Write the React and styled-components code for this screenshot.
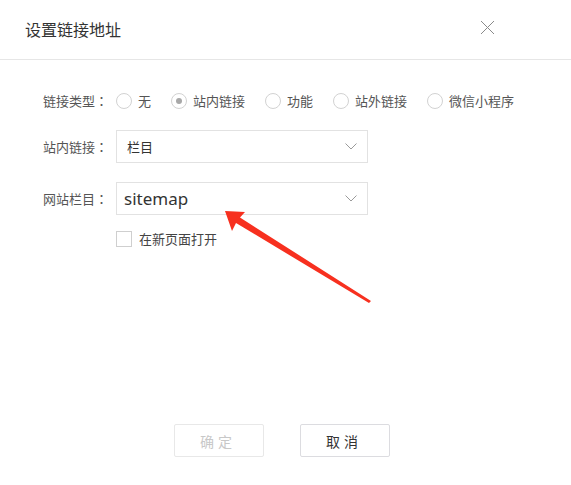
import React from 'react'
import styled, { createGlobalStyle } from 'styled-components'

const GlobalStyle = createGlobalStyle`
  html, body {
    margin: 0;
    padding: 0;
    background: #fff;
  }
  body {
    font-family: "Noto Sans CJK SC", "Noto Sans", sans-serif;
  }
`

const Dialog = styled.div`
  position: relative;
  width: 571px;
  height: 485px;
  display: flex;
  flex-direction: column;
  background: #fff;
  overflow: hidden;
`

const Header = styled.div`
  height: 59px;
  display: flex;
  align-items: center;
  justify-content: space-between;
  padding: 0 76px 0 25px;
  border-bottom: 1px solid #e6e6e6;
  box-sizing: content-box;
`

const Title = styled.h2`
  margin: 0 0 1px;
  font-size: 16px;
  font-weight: normal;
  color: #333;
  line-height: 20px;
`

const CloseBtn = styled.button`
  width: 15px;
  height: 15px;
  padding: 0;
  border: none;
  background: none;
  display: flex;
  margin-top: -4px;
`

const Body = styled.div`
  flex: 1;
  padding: 24px 0 0 43px;
  display: flex;
  flex-direction: column;
`

const Row = styled.div`
  display: flex;
  align-items: center;
  height: 33px;
  margin-top: ${p => p.$gap || 0}px;
`

const Label = styled.div`
  width: 73px;
  font-size: 13px;
  color: #555;
  flex-shrink: 0;
`

// full-width colon centred in its cell, as in the original
const Colon = styled.span`
  font-family: "Noto Sans CJK JP", sans-serif;
`

const RadioGroup = styled.div`
  display: flex;
  align-items: center;
  gap: 20px;
`

const RadioItem = styled.label`
  display: flex;
  align-items: center;
  gap: 6px;
  font-size: 13px;
  color: #555;
`

const Circle = styled.span`
  width: 14px;
  height: 14px;
  border: 1px solid #d2d2d2;
  border-radius: 50%;
  display: flex;
  align-items: center;
  justify-content: center;
  &::after {
    content: '';
    width: 6px;
    height: 6px;
    border-radius: 50%;
    background: #a8a8a8;
    display: ${p => (p.$checked ? 'block' : 'none')};
  }
`

const Select = styled.div`
  width: 252px;
  height: 33px;
  border: 1px solid #e2e2e2;
  display: flex;
  align-items: center;
  justify-content: space-between;
  padding: 0 10px 0 ${p => (p.$big ? 7 : 10)}px;
  font-family: ${p => (p.$big ? '"Noto Sans", sans-serif' : 'inherit')};
  font-size: ${p => (p.$big ? 17 : 13)}px;
  color: #333;
  box-sizing: border-box;
`

const CheckRow = styled.label`
  display: flex;
  align-items: center;
  gap: 7px;
  margin: 14px 0 0 73px;
  font-size: 13px;
  color: #444;
`

const Box = styled.span`
  width: 14px;
  height: 14px;
  border: 1px solid #cfcfcf;
`

const Footer = styled.div`
  display: flex;
  justify-content: center;
  gap: 36px;
  padding: 0 7px 28px 0;
`

const Button = styled.button`
  width: 90px;
  height: 33px;
  background: #fff;
  border: 1px solid ${p => (p.disabled ? '#e8e8e8' : '#dcdce0')};
  border-radius: 2px;
  font-family: "Noto Sans CJK SC", sans-serif;
  font-size: 14px;
  letter-spacing: 4px;
  padding-left: 4px;
  color: ${p => (p.disabled ? '#c8c8c8' : '#333')};
`

const Arrow = styled.svg`
  position: absolute;
  left: 0;
  top: 0;
  pointer-events: none;
`

const Chevron = () => (
  <svg width="12" height="7" viewBox="0 0 12 7">
    <path d="M0.5 0.5 L6 6 L11.5 0.5" fill="none" stroke="#9a9a9a" strokeWidth="1" />
  </svg>
)

const types = ['无', '站内链接', '功能', '站外链接', '微信小程序']

export default function App() {
  return (
    <Dialog>
      <GlobalStyle />
      <Header>
        <Title>设置链接地址</Title>
        <CloseBtn>
          <svg width="15" height="15" viewBox="0 0 15 15">
            <path d="M1 1 L14 14 M14 1 L1 14" stroke="#8a8a8a" strokeWidth="1" />
          </svg>
        </CloseBtn>
      </Header>
      <Body>
        <Row>
          <Label>链接类型<Colon>：</Colon></Label>
          <RadioGroup>
            {types.map(t => (
              <RadioItem key={t}>
                <Circle $checked={t === '站内链接'} />
                {t}
              </RadioItem>
            ))}
          </RadioGroup>
        </Row>
        <Row $gap={13}>
          <Label>站内链接<Colon>：</Colon></Label>
          <Select>
            栏目
            <Chevron />
          </Select>
        </Row>
        <Row $gap={19}>
          <Label>网站栏目<Colon>：</Colon></Label>
          <Select $big>
            sitemap
            <Chevron />
          </Select>
        </Row>
        <CheckRow>
          <Box />
          在新页面打开
        </CheckRow>
      </Body>
      <Footer>
        <Button disabled>确定</Button>
        <Button>取消</Button>
      </Footer>
      <Arrow width="571" height="485">
        <polygon
          points="225,211 245,212 240,217.5 371,301 369,303 236,223 232,231"
          fill="#f7301f"
        />
      </Arrow>
    </Dialog>
  )
}
